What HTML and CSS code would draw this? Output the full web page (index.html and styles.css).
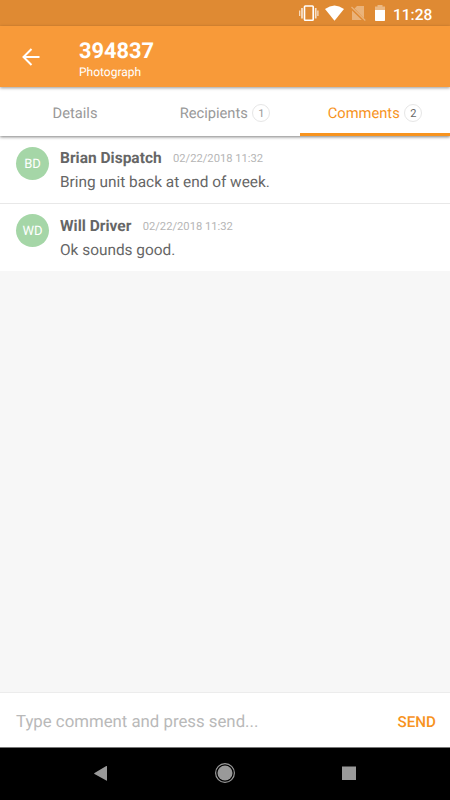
FILE: index.html
```html
<!DOCTYPE html>
<html lang="en">
<head>
<meta charset="utf-8">
<title>394837</title>
<link rel="stylesheet" href="styles.css">
</head>
<body>
<div class="status">
  <svg class="status-icons" width="90" height="26" viewBox="0 0 90 26">
    <g fill="none" stroke="#fff">
      <rect x="5.500" y="6" width="8.700" height="14.300" rx="0.800" stroke-width="1.600"/>
      <path d="M3 8v10.500M16.700 8v10.500" stroke-width="1.700" opacity=".75"/>
      <path d="M0.700 10.500v5.500M18.900 10.500v5.500" stroke-width="1.200" opacity=".75"/>
    </g>
    <path d="M26 9Q35.500 2 45 9L35.500 20.800Z" fill="#fff"/>
    <g opacity=".35">
      <path d="M58 6H65V18.200L55.500 8.500ZM53 10.500L62.800 20H53Z" fill="#fff"/>
      <path d="M52.500 7L66.300 20.500" stroke="#fff" stroke-width="1.200"/>
    </g>
    <path d="M78.500 5h5V6.500H86v3.500H76V6.500h2.500Z" fill="#fff" opacity=".4"/>
    <path d="M76 10h10v10.200q0 .8-.8.8h-8.400q-.8 0-.8-.8Z" fill="#fff"/>
  </svg>
  <span class="clock">11:28</span>
</div>
<header class="appbar">
  <svg class="back" width="20" height="20" viewBox="0 0 20 20" fill="none" stroke="#fff" stroke-width="2">
    <path d="M18.500 10H3M10.500 2L2.500 10L10.500 18"/>
  </svg>
  <div class="heading">
    <h1 class="title">394837</h1>
    <div class="subtitle">Photograph</div>
  </div>
</header>
<nav class="tabs">
  <div class="tab">Details</div>
  <div class="tab">Recipients<span class="count">1</span></div>
  <div class="tab active">Comments<span class="count">2</span></div>
</nav>
<main class="comments">
  <article class="comment">
    <div class="avatar">BD</div>
    <div class="content">
      <div class="meta"><span class="name">Brian Dispatch</span><span class="time">02/22/2018 11:32</span></div>
      <div class="text">Bring unit back at end of week.</div>
    </div>
  </article>
  <article class="comment">
    <div class="avatar">WD</div>
    <div class="content">
      <div class="meta"><span class="name">Will Driver</span><span class="time">02/22/2018 11:32</span></div>
      <div class="text">Ok sounds good.</div>
    </div>
  </article>
</main>
<div class="composer">
  <span class="placeholder">Type comment and press send...</span>
  <span class="send">SEND</span>
</div>
<div class="navbar">
  <svg width="24" height="24" viewBox="0 0 24 24"><path d="M18 5v14.200q0 .8-.7.400L5.500 13q-.9-.5 0-1L17.300 5.100q.7-.4.7.4Z" fill="#999"/></svg>
  <svg width="24" height="24" viewBox="0 0 24 24"><circle cx="12" cy="12" r="9.400" fill="none" stroke="#999" stroke-width="1.200"/><circle cx="12" cy="12" r="7.500" fill="#999"/></svg>
  <svg width="24" height="24" viewBox="0 0 24 24"><rect x="5" y="5.500" width="14" height="13.500" fill="#999"/></svg>
</div>
</body>
</html>
```
FILE: styles.css
```css
* { box-sizing: border-box; }
body {
  margin: 0;
  width: 450px;
  height: 800px;
  display: flex;
  flex-direction: column;
  overflow: hidden;
  background: #f7f7f7;
  font-family: Roboto, "Liberation Sans", sans-serif;
  white-space: nowrap;
  text-rendering: geometricPrecision;
}
.status {
  height: 26px;
  flex: none;
  display: flex;
  justify-content: flex-end;
  padding-right: 17px;
  background: #df8a33;
  color: #fff;
}
.status-icons { margin-right: 4px; }
.clock { width: 40px; font-size: 15.500px; line-height: 30px; font-weight: 500; }
.appbar {
  height: 61px;
  flex: none;
  display: flex;
  padding-left: 21px;
  background: #f89a39;
  color: #fff;
  box-shadow: 0 1px 3px rgba(0, 0, 0, .4);
  z-index: 2;
}
.back { margin-top: 21px; margin-right: 38px; }
.heading { padding-top: 12px; }
.title { margin: 0; font-size: 21.800px; line-height: 28px; font-weight: 700; }
.subtitle { margin-top: -1px; font-size: 12px; line-height: 15px; }
.tabs {
  height: 49px;
  flex: none;
  display: grid;
  grid-template-columns: repeat(3, 1fr);
  background: #fff;
  box-shadow: 0 1px 3px rgba(0, 0, 0, .5);
  z-index: 1;
}
.tab {
  display: flex;
  align-items: center;
  justify-content: center;
  padding-top: 5px;
  border-bottom: 3px solid transparent;
  font-size: 14.700px;
  color: #999;
}
.active { color: #f7931e; border-color: #f7931e; }
.count {
  width: 18px;
  height: 18px;
  margin-left: 4.500px;
  border: 1px solid #e6e6e6;
  border-radius: 50%;
  font-size: 11px;
  line-height: 17px;
  text-align: center;
  color: #999;
}
.active .count { color: #666; }
.comments { flex: 1; }
.comment {
  display: flex;
  height: 67px;
  padding: 11px 16px 0;
  background: #fff;
}
.comment + .comment { height: 68px; border-top: 1px solid #e8e8e8; }
.comment + .comment .avatar { margin-top: -1px; }
.avatar {
  width: 33px;
  height: 33px;
  margin-right: 11px;
  border-radius: 50%;
  background: #a5d6a7;
  color: #fff;
  font-size: 13px;
  line-height: 35px;
  text-align: center;
}
.meta { display: flex; align-items: center; height: 22px; }
.name { margin-right: 11.300px; font-size: 15.500px; font-weight: 700; color: #666; }
.time { font-size: 11.200px; color: #b5b5b5; }
.text { font-size: 15.400px; line-height: 27px; color: #666; }
.composer {
  height: 55px;
  flex: none;
  display: flex;
  align-items: center;
  justify-content: space-between;
  padding: 3px 14px 0 16px;
  border-top: 1px solid #ececec;
  background: #fff;
}
.placeholder { font-size: 16.800px; color: #b9b9b9; }
.send { font-size: 15.200px; font-weight: 500; color: #f7931e; }
.navbar {
  height: 53px;
  flex: none;
  display: flex;
  align-items: center;
  justify-content: space-between;
  padding: 0 89px 2px;
  border-top: 1px solid #777;
  background: #000;
}
```
